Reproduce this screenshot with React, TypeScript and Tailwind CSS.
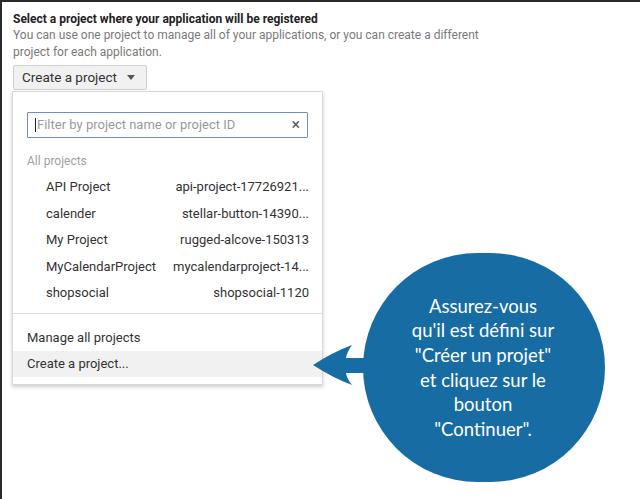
import React from "react";

const rows = [
  ["API Project", "api-project-17726921..."],
  ["calender", "stellar-button-14390..."],
  ["My Project", "rugged-alcove-150313"],
  ["MyCalendarProject", "mycalendarproject-14..."],
  ["shopsocial", "shopsocial-1120"],
];

export default function App() {
  return (
    <div
      className="relative w-[640px] h-[499px] bg-white overflow-hidden border-l-2 border-t-2 border-[#2a2a2a]"
      style={{ fontFamily: "Roboto, Arial, sans-serif" }}
    >
      <div className="pl-[11px] pt-[9px]">
        <div className="text-[12px] font-bold text-[#222] leading-[16px]">
          Select a project where your application will be registered
        </div>
        <div className="text-[12px] text-[#7a7a7a] leading-[17px] w-[480px]">
          You can use one project to manage all of your applications, or you can create a different project for each application.
        </div>
        <div className="mt-[4px] inline-flex items-center h-[25px] pl-[8px] pr-[11px] bg-[#f1f1f1] border border-[#d0d0d0] rounded-[2px] text-[13.5px] text-[#333]">
          Create a project
          <svg width="8" height="5" viewBox="0 0 8 5" className="ml-[10px]">
            <path d="M0 0 L8 0 L4 5 Z" fill="#555" />
          </svg>
        </div>
        <div className="w-[311px] -ml-[1px] mt-[1px] bg-white border border-[#d8d8d8] shadow-[0_2px_4px_rgba(0,0,0,0.2)] pb-[7px]">
          <div className="px-[14px] pt-[20px]">
            <div className="flex items-center h-[26px] border border-[#6d8fc8] rounded-[1px] px-[7px]">
              <div className="w-[1px] h-[14px] bg-[#222]" />
              <span className="ml-[1px] text-[13px] text-[#9a9a9a] flex-1">
                Filter by project name or project ID
              </span>
              <span className="text-[16px] text-[#555] leading-none">×</span>
            </div>
            <div className="mt-[14px] text-[12px] text-[#a0a0a0] leading-[18px]">All projects</div>
          </div>
          <div className="pt-[4px]">
            {rows.map(([n, id]) => (
              <div key={n} className="flex items-center justify-between h-[26.4px] pl-[33px] pr-[13px] text-[13px] text-[#333]">
                <span>{n}</span>
                <span>{id}</span>
              </div>
            ))}
          </div>
          <div className="mt-[7px] border-t border-[#dcdcdc]" />
          <div className="pt-[11px]">
            <div className="h-[26px] flex items-center pl-[14px] text-[13px] text-[#333]">Manage all projects</div>
            <div className="h-[26px] flex items-center pl-[14px] text-[13px] text-[#333] bg-[#f1f1f1]">Create a project...</div>
          </div>
        </div>
      </div>

      {/* callout */}
      <div className="absolute left-[361px] top-[251px] w-[242px] h-[229px] rounded-full bg-[#176ca4] flex items-center justify-center">
        <div
          className="text-white text-center text-[18.5px] leading-[24.6px] mt-0 -ml-[2px]"
          style={{ fontFamily: "Lato, 'Open Sans', sans-serif" }}
        >
          Assurez-vous
          <br />
          qu'il est défini sur
          <br />
          "Créer un projet"
          <br />
          et cliquez sur le
          <br />
          bouton
          <br />
          "Continuer".
        </div>
      </div>
      <svg className="absolute left-[309px] top-[340px]" width="60" height="46" viewBox="0 0 60 46">
        <path d="M2 23 Q22 10 41 3 Q36 10 35 16 L58 16 L58 31 L35 31 Q36 37 41 43 Q22 36 2 23 Z" fill="#176ca4" />
      </svg>
    </div>
  );
}
